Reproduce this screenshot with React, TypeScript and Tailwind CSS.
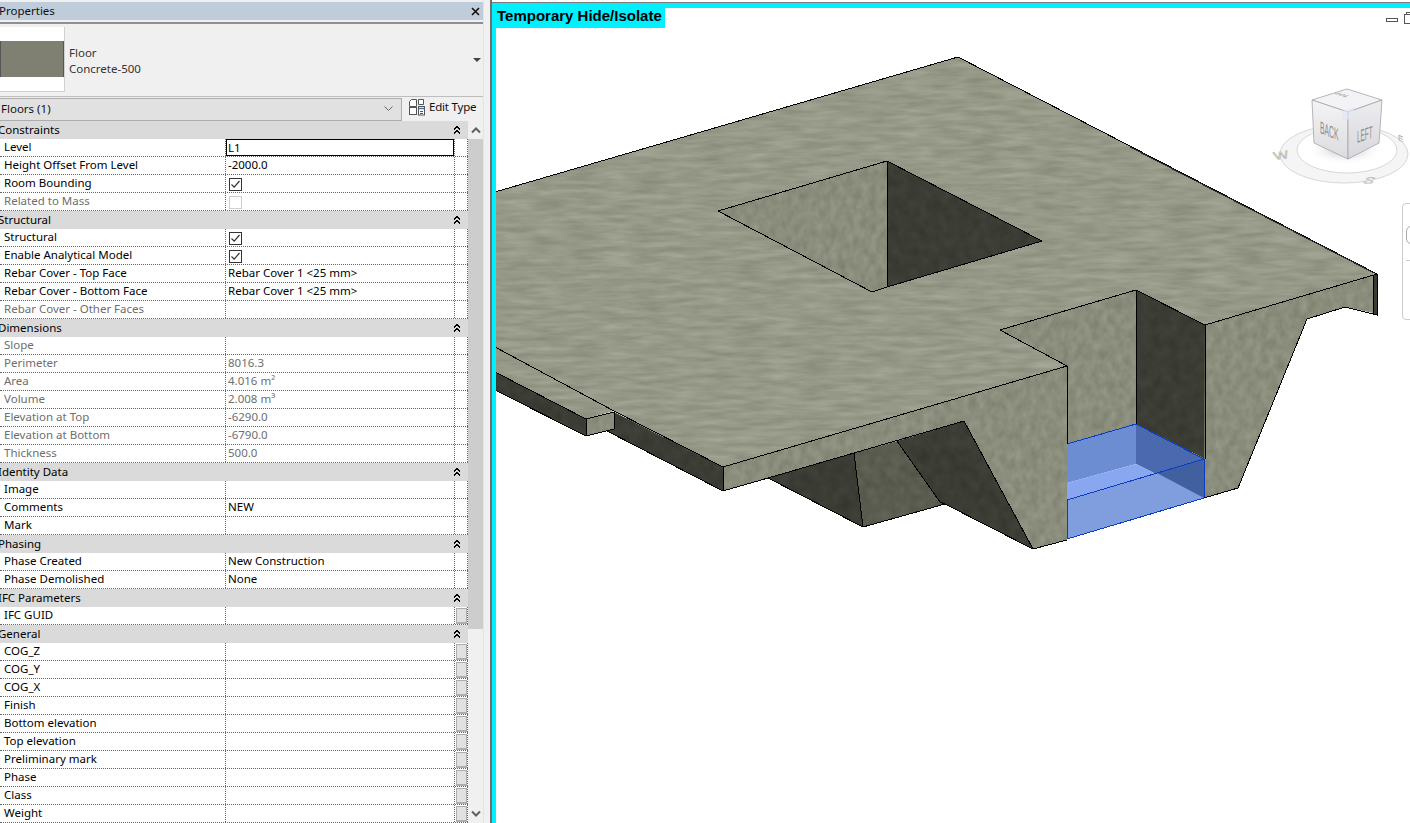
import React from "react";

type Row =
  | { h: string }
  | { l: string; v?: string; d?: boolean; c?: boolean; cd?: boolean; b?: boolean; input?: boolean };

const rows: Row[] = [
  { h: "Constraints" },
  { l: "Level", v: "L1", input: true },
  { l: "Height Offset From Level", v: "-2000.0" },
  { l: "Room Bounding", c: true },
  { l: "Related to Mass", d: true, cd: true },
  { h: "Structural" },
  { l: "Structural", c: true },
  { l: "Enable Analytical Model", c: true },
  { l: "Rebar Cover - Top Face", v: "Rebar Cover 1 <25 mm>" },
  { l: "Rebar Cover - Bottom Face", v: "Rebar Cover 1 <25 mm>" },
  { l: "Rebar Cover - Other Faces", d: true },
  { h: "Dimensions" },
  { l: "Slope", d: true },
  { l: "Perimeter", v: "8016.3", d: true },
  { l: "Area", v: "4.016 m²", d: true },
  { l: "Volume", v: "2.008 m³", d: true },
  { l: "Elevation at Top", v: "-6290.0", d: true },
  { l: "Elevation at Bottom", v: "-6790.0", d: true },
  { l: "Thickness", v: "500.0", d: true },
  { h: "Identity Data" },
  { l: "Image" },
  { l: "Comments", v: "NEW" },
  { l: "Mark" },
  { h: "Phasing" },
  { l: "Phase Created", v: "New Construction" },
  { l: "Phase Demolished", v: "None" },
  { h: "IFC Parameters" },
  { l: "IFC GUID", b: true },
  { h: "General" },
  { l: "COG_Z", b: true },
  { l: "COG_Y", b: true },
  { l: "COG_X", b: true },
  { l: "Finish", b: true },
  { l: "Bottom elevation", b: true },
  { l: "Top elevation", b: true },
  { l: "Preliminary mark", b: true },
  { l: "Phase", b: true },
  { l: "Class", b: true },
  { l: "Weight", b: true },
];

function Collapse() {
  return (
    <svg width="8" height="10" viewBox="0 0 8 10" className="block" shapeRendering="crispEdges">
      <path d="M1 4.5 L4 1.5 L7 4.5 M1 8.5 L4 5.5 L7 8.5" fill="none" stroke="#000" strokeWidth="1.4" />
    </svg>
  );
}

function Check({ disabled }: { disabled?: boolean }) {
  return (
    <div
      className={`w-[13px] h-[13px] border bg-white flex items-center justify-center ${
        disabled ? "border-[#cfcfcf]" : "border-[#333333]"
      }`}
    >
      {!disabled && (
        <svg width="11" height="11" viewBox="0 0 11 11">
          <path d="M1.5 5.5 L4.2 8.2 L9.5 2" fill="none" stroke="#333" strokeWidth="1.2" />
        </svg>
      )}
    </div>
  );
}

function TableRow({ r }: { r: Row }) {
  if ("h" in r) {
    return (
      <div className="h-[18px] bg-[#dadada] relative overflow-hidden">
        <span className="absolute left-[-2px] top-0 text-black leading-[18px] whitespace-nowrap">{r.h}</span>
        <span className="absolute left-[453px] top-[4px]">
          <Collapse />
        </span>
      </div>
    );
  }
  const col = r.d ? "text-[#6e6e6e]" : "text-black";
  return (
    <div className="h-[18px] bg-white flex border-b border-dotted border-b-[#666666] leading-[16px]">
      <div className={`w-[225px] pl-1 shrink-0 whitespace-nowrap ${col}`}>{r.l}</div>
      <div className="w-[230px] shrink-0 border-l border-r border-dotted border-[#666666] relative">
        {r.input ? (
          <div className="absolute left-0 top-0 right-0 h-[17px] border border-black pl-[1px] leading-[15px] text-black">
            {r.v}
          </div>
        ) : r.c || r.cd ? (
          <div className="pl-[3px] pt-[3px]">
            <Check disabled={r.cd} />
          </div>
        ) : (
          <div className={`pl-[2px] whitespace-nowrap ${col}`}>{r.v}</div>
        )}
      </div>
      <div className="flex-1 border-r border-dotted border-[#666666] relative">
        {r.b && (
          <div className="absolute left-[1px] top-[1px] right-0 h-[16px] bg-[#e1e1e1] border border-[#adadad] border-b-2" />
        )}
      </div>
    </div>
  );
}

function Tex({ id, c, k, fx, fy, seed, oct = 2 }: { id: string; c: [number, number, number]; k: number; fx: number; fy: number; seed: number; oct?: number }) {
  const m = (v: number) => (v / 255 - k / 2).toFixed(3);
  return (
    <filter id={id} filterUnits="userSpaceOnUse" x="495" y="8" width="915" height="815" colorInterpolationFilters="sRGB">
      <feTurbulence type="fractalNoise" baseFrequency={`${fx} ${fy}`} numOctaves={oct} seed={seed} result="n" />
      <feColorMatrix
        in="n"
        type="matrix"
        values={`${k} 0 0 0 ${m(c[0])}  ${k} 0 0 0 ${m(c[1])}  ${k} 0 0 0 ${m(c[2])}  0 0 0 0 1`}
        result="t"
      />
      <feComposite in="t" in2="SourceAlpha" operator="in" />
    </filter>
  );
}

function Model() {
  const L = { stroke: "#000", strokeWidth: 1, fill: "none", shapeRendering: "crispEdges" as const };
  const B = { stroke: "#0a3cc4", strokeWidth: 1, fill: "none", shapeRendering: "crispEdges" as const };
  return (
    <svg viewBox="496 8 914 815" width="914" height="815" className="block absolute left-0 top-0">
      <defs>
        <Tex id="top" c={[150, 153, 136]} k={0.15} fx={0.03} fy={0.19} seed={4} oct={3} />
        <Tex id="lite" c={[138, 140, 124]} k={0.13} fx={0.13} fy={0.1} seed={9} />
        <Tex id="mid" c={[90, 92, 80]} k={0.1} fx={0.1} fy={0.09} seed={11} />
        <Tex id="dark" c={[59, 61, 53]} k={0.07} fx={0.1} fy={0.08} seed={7} />
      </defs>

      {/* lower, hidden-side faces */}
      <polygon filter="url(#dark)" points="495,372 586,419 586,436 495,390" />
      <polygon filter="url(#lite)" points="586,419 614,412 614,429 586,436" />
      <polygon filter="url(#dark)" points="614,412 723,467 723,491 607,431 614,429" />
      <polygon filter="url(#dark)" points="768,478 854,453 863,527" />
      <polygon filter="url(#mid)" points="854,453 897,441 940,502 945,504 863,527" />
      <polygon filter="url(#dark)" points="897,441 964,421 1033,549 945,504 940,502" />
      <polygon filter="url(#lite)" points="723,467 1067,366 1067,540 1033,549 964,421 768,478 723,491" />

      {/* top slab */}
      <polygon
        filter="url(#top)"
        points="495,192 958,57 1377,274 1205,325 1136,290 1000,330 1067,366 723,467 614,411 586,419 495,372"
      />

      {/* opening in the slab */}
      <polygon filter="url(#lite)" points="718,211 887,161 887,287 872,292" />
      <polygon filter="url(#dark)" points="887,161 1042,241 887,287" />

      {/* shaft */}
      <polygon filter="url(#lite)" points="1000,330 1136,290 1136,424 1067,444 1067,366" />
      <polygon filter="url(#dark)" points="1136,290 1205,325 1205,459 1136,424" />
      <polygon filter="url(#lite)" points="1205,325 1373,275 1373,313 1345,307 1307,319 1238,488 1204,498" />
      <polygon filter="url(#dark)" points="1373,275 1377,274 1377,315 1373,314" />

      {/* blue section box */}
      <polygon points="1067,444 1136,424 1136,464 1067,483" fill="#6d8dd2" />
      <polygon points="1136,424 1204,459 1204,498 1136,464" fill="#4a69ae" />
      <polygon points="1067,483 1136,464 1204,498 1067,539" fill="#88a7f0" />
      <polygon points="1067,500 1204,459 1204,498 1067,539" fill="#7f9cdc" opacity="0.9" />
      <polygon points="1157,473 1204,459 1204,498" fill="#41609f" />
      <polyline {...B} points="1067,444 1136,424 1204,459 1067,500 1067,539 1204,498 1204,459" />

      {/* outlines */}
      <polyline {...L} points="495,192 958,57 1377,274 1205,325 1136,290 1000,330 1067,366 723,467" />
      <polyline stroke="#2d2d2d" strokeWidth="1" fill="none" shapeRendering="crispEdges" points="1130,147 1374,273" />
      <polyline {...L} points="495,347 614,411 723,467 723,491 768,478" />
      <polyline {...L} points="495,372 586,419 614,412 614,429 586,436 495,390" />
      <polyline {...L} points="586,419 586,436" />
      <polyline {...L} points="607,431 723,491" />
      <polyline {...L} points="768,478 964,421 1033,549 1067,540" />
      <polyline {...L} points="768,478 863,527 945,504 1033,549" />
      <polyline {...L} points="854,453 863,527" />
      <polyline {...L} points="897,441 940,502 945,504" />
      <polyline {...L} points="1067,366 1067,444" />
      <polyline {...L} points="1136,290 1136,424" />
      <polyline {...L} points="1205,325 1205,459" />
      <polyline {...L} points="1204,498 1238,488 1307,319 1345,307 1373,314 1377,315 1377,274" />
      <polyline {...L} points="1373,275 1373,314" />
      <polyline {...L} points="718,211 887,161 1042,241 887,287 872,292 718,211" />
      <polyline {...L} points="887,161 887,287" />

      {/* ViewCube */}
      <defs>
        <radialGradient id="cubeShadow">
          <stop offset="0%" stopColor="#9a9a9a" stopOpacity="0.7" />
          <stop offset="100%" stopColor="#ffffff" stopOpacity="0" />
        </radialGradient>
        <linearGradient id="cubeL" x1="0" y1="0" x2="0" y2="1">
          <stop offset="0%" stopColor="#f4f4f6" />
          <stop offset="100%" stopColor="#dcdce0" />
        </linearGradient>
        <linearGradient id="cubeR" x1="0" y1="0" x2="0" y2="1">
          <stop offset="0%" stopColor="#ededf0" />
          <stop offset="100%" stopColor="#d8d8dc" />
        </linearGradient>
      </defs>
      <ellipse cx="1344" cy="154" rx="64" ry="29" fill="#f5f5f5" stroke="#d8d8d8" strokeWidth="1" />
      <ellipse cx="1347" cy="150" rx="50" ry="23" fill="#ffffff" stroke="#d8d8d8" strokeWidth="1" />
      <ellipse cx="1345" cy="150" rx="38" ry="15" fill="url(#cubeShadow)" />
      <polygon points="1312,100 1347,89 1382,100 1348,112" fill="#f3f3f5" stroke="#a5a5a9" strokeWidth="0.8" />
      <polygon points="1312,100 1348,112 1348,159 1314,143" fill="url(#cubeL)" stroke="#a5a5a9" strokeWidth="0.8" />
      <polygon points="1348,112 1382,100 1379,143 1348,159" fill="url(#cubeR)" stroke="#a5a5a9" strokeWidth="0.8" />
      <polygon points="1342,111 1354,107 1354,118 1342,121" fill="#e3e7f2" opacity="0.7" />
      <text transform="matrix(0.62 0.26 0 1.55 1320 133)" fontFamily="Liberation Sans, sans-serif" fontSize="11" fill="#8a8a90">
        BACK
      </text>
      <text transform="matrix(0.58 -0.2 0 1.55 1357 143)" fontFamily="Liberation Sans, sans-serif" fontSize="11" fill="#8a8a90">
        LEFT
      </text>
      <text transform="matrix(-0.75 -0.22 0.75 -0.22 1350 96)" fontFamily="Liberation Sans, sans-serif" fontSize="8" fontWeight="700" fill="#a0a0a4">
        TOP
      </text>
      <text transform="matrix(1.1 -0.15 0.25 0.75 1275 160)" fontFamily="Liberation Sans, sans-serif" fontSize="14" fill="#e4e4e4" stroke="#a8a8a8" strokeWidth="0.5">
        W
      </text>
      <text transform="matrix(1.05 0.1 -0.5 0.65 1362 183)" fontFamily="Liberation Sans, sans-serif" fontSize="14" fill="#e4e4e4" stroke="#a8a8a8" strokeWidth="0.5">
        S
      </text>
      <text transform="matrix(0.7 0.3 0 0.7 1398 140)" fontFamily="Liberation Sans, sans-serif" fontSize="11" fill="#e4e4e4" stroke="#a8a8a8" strokeWidth="0.5">
        E
      </text>

      {/* view controls */}
      <rect x="1386.5" y="18.5" width="11" height="3" fill="#fff" stroke="#555" />
      <rect x="1404.5" y="14.5" width="8" height="9" fill="#fff" stroke="#555" />
      <rect x="1406.5" y="12.5" width="4" height="2" fill="#fff" stroke="#555" />
    </svg>
  );
}

function EditTypeIcon() {
  return (
    <svg width="17" height="17" viewBox="0 0 17 17" className="block">
      <g fill="#fff" stroke="#555" strokeWidth="1">
        <path d="M1.5 2.5 L3.5 0.5 H8.5 V7.5 H1.5 Z" />
        <rect x="1.5" y="8.5" width="7" height="7" />
        <path d="M10.5 0.5 H15.5 V5.5 H10.5 Z" />
        <rect x="10.5" y="7.5" width="6" height="8.5" />
      </g>
      <path d="M10.5 9.5 H16.5" stroke="#3a6ea8" strokeWidth="1.4" />
      <path d="M12 12.5 H15 M12 14.5 H15" stroke="#555" strokeWidth="1" />
    </svg>
  );
}

export default function App() {
  return (
    <div
      className="w-[1410px] h-[823px] overflow-hidden flex bg-white text-[11.5px]"
      style={{ fontFamily: '"Noto Sans", "Liberation Sans", sans-serif' }}
    >
      {/* Properties palette */}
      <div className="w-[490px] h-full shrink-0 bg-[#f0f0f0] flex">
        <div className="w-[484px] flex flex-col pt-[2px] border-r border-[#e4e4e4]">
          <div className="h-[18px] bg-[#bfcddb] relative shrink-0 overflow-hidden">
            <span className="absolute left-[-1px] top-0 leading-[18px] text-[#111]">Properties</span>
            <svg width="9" height="9" viewBox="0 0 9 9" className="absolute right-[3px] top-[5px]">
              <path d="M1 1 L8 8 M8 1 L1 8" stroke="#111" strokeWidth="1.6" />
            </svg>
          </div>
          <div className="h-[2px] bg-[#8f8f8f] shrink-0 mt-[2px]" />

          <div className="h-[73px] flex items-center relative shrink-0 border-b border-[#bdbdbd] pb-[1px]">
            <div className="w-[65px] h-[65px] bg-white border-r border-b border-[#d0d0d0] flex items-center shrink-0">
              <div className="w-full h-[36px] bg-[#7f8072] border-l border-r border-[#555555]" />
            </div>
            <div className="ml-1 pt-[2px] flex flex-col text-[#333] leading-[16px]">
              <span>Floor</span>
              <span>Concrete-500</span>
            </div>
            <div className="absolute right-[2px] top-[34px] w-0 h-0 border-l-[4px] border-r-[4px] border-t-[4px] border-l-transparent border-r-transparent border-t-[#444]" />
          </div>

          <div className="h-[24px] flex shrink-0 pt-[1px]">
            <div className="w-[402px] h-[23px] bg-[#e1e1e1] border-b border-r border-t border-[#adadad] flex items-center justify-between pr-[8px] pb-[2px] shrink-0">
              <span className="ml-[1px] text-[#111]">Floors (1)</span>
              <svg width="9" height="6" viewBox="0 0 9 6">
                <path d="M0.5 0.5 L4.5 4.5 L8.5 0.5" fill="none" stroke="#666" />
              </svg>
            </div>
            <div className="flex items-start pl-[6px] pt-[1px] gap-[4px]">
              <EditTypeIcon />
              <span className="text-[#111] leading-[16px] tracking-[-0.2px] whitespace-nowrap">Edit Type</span>
            </div>
          </div>

          <div className="flex flex-1 min-h-0">
            <div className="w-[468px] shrink-0 flex flex-col">
              {rows.map((r, i) => (
                <TableRow key={i} r={r} />
              ))}
            </div>
            <div className="flex-1 flex flex-col bg-[#f0f0f0]">
              <div className="h-[18px] flex items-center justify-center shrink-0">
                <svg width="10" height="7" viewBox="0 0 10 7">
                  <path d="M1 5.5 L5 1.5 L9 5.5" fill="none" stroke="#606060" strokeWidth="2" />
                </svg>
              </div>
              <div className="h-[490px] bg-[#cdcdcd] shrink-0" />
              <div className="flex-1 flex items-end justify-center pb-[6px]">
                <svg width="10" height="7" viewBox="0 0 10 7">
                  <path d="M1 1.5 L5 5.5 L9 1.5" fill="none" stroke="#606060" strokeWidth="2" />
                </svg>
              </div>
            </div>
          </div>
        </div>
      </div>

      {/* View window */}
      <div className="flex-1 h-full border-l-2 border-[#6f6f6f] flex flex-col pt-[2px]">
        <div className="flex-1 min-h-0 border-t border-[#7a7a7a] flex flex-col">
          <div className="flex-1 min-h-0 border-l-4 border-t-[5px] border-[#00f0ff] relative bg-white overflow-hidden">
            <Model />
            <div
              className="absolute left-0 top-0 h-[20px] w-[169px] bg-[#00f0ff] pl-[1px] text-[15px] font-bold leading-[16px] text-black whitespace-nowrap"
              style={{ fontFamily: '"Liberation Sans", sans-serif' }}
            >
              Temporary Hide/Isolate
            </div>
            <div className="absolute right-[-10px] top-[195px] w-[18px] h-[117px] bg-white border border-[#cccccc] rounded-[4px]">
              <div className="mt-[22px] ml-[3px] w-[10px] h-[18px] rounded-full border border-[#aaaaaa]" />
              <div className="mt-[16px] ml-[3px] h-px bg-[#cccccc]" />
            </div>
          </div>
        </div>
      </div>
    </div>
  );
}
